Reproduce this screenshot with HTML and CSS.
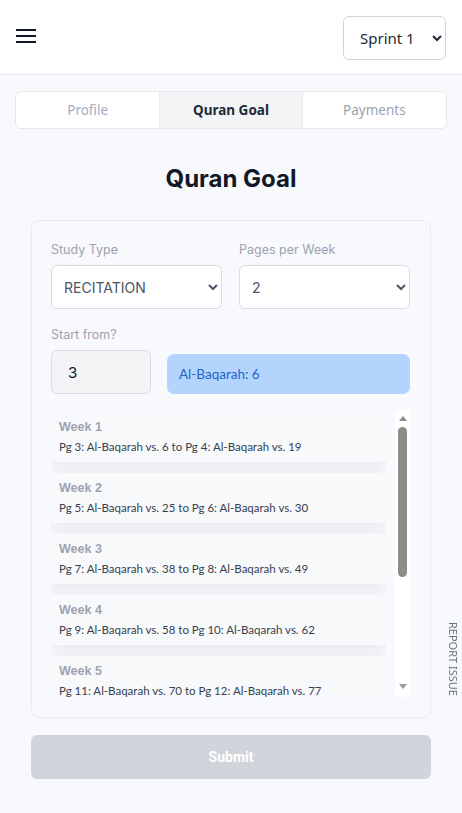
FILE: index.html
```html
<!DOCTYPE html>
<html lang="en">
<head>
<meta charset="utf-8">
<title>Quran Goal</title>
<link rel="stylesheet" href="styles.css">
</head>
<body>
<header class="topbar">
  <button class="menu-btn" aria-label="Menu">
    <svg width="22" height="16" viewBox="0 0 22 16"><path d="M1 2h20M1 8h20M1 14h20" stroke="#111827" stroke-width="2" fill="none"/></svg>
  </button>
  <select class="sprint">
    <option>Sprint 1</option>
    <option>Sprint 2</option>
  </select>
</header>
<main class="page">
  <nav class="tabs">
    <div class="tab">Profile</div>
    <div class="tab active">Quran Goal</div>
    <div class="tab">Payments</div>
  </nav>
  <h1 class="title">Quran Goal</h1>
  <section class="card">
    <div class="grid2">
      <div class="field">
        <label class="label">Study Type</label>
        <select class="control"><option>RECITATION</option><option>MEMORIZATION</option></select>
      </div>
      <div class="field">
        <label class="label">Pages per Week</label>
        <select class="control"><option>2</option><option>1</option><option>3</option></select>
      </div>
    </div>
    <div class="field start">
      <label class="label">Start from?</label>
      <div class="start-row">
        <input class="num" type="text" value="3">
        <div class="surah">Al-Baqarah: 6</div>
      </div>
    </div>
    <div class="weeks-wrap">
      <div class="weeks">
        <div class="week"><div class="wk">Week 1</div><div class="wd">Pg 3: Al-Baqarah vs. 6 to Pg 4: Al-Baqarah vs. 19</div></div>
        <div class="week"><div class="wk">Week 2</div><div class="wd">Pg 5: Al-Baqarah vs. 25 to Pg 6: Al-Baqarah vs. 30</div></div>
        <div class="week"><div class="wk">Week 3</div><div class="wd">Pg 7: Al-Baqarah vs. 38 to Pg 8: Al-Baqarah vs. 49</div></div>
        <div class="week"><div class="wk">Week 4</div><div class="wd">Pg 9: Al-Baqarah vs. 58 to Pg 10: Al-Baqarah vs. 62</div></div>
        <div class="week"><div class="wk">Week 5</div><div class="wd">Pg 11: Al-Baqarah vs. 70 to Pg 12: Al-Baqarah vs. 77</div></div>
      </div>
      <div class="scrollbar" aria-hidden="true">
        <span class="arrow up"></span>
        <span class="thumb"></span>
        <span class="arrow down"></span>
      </div>
    </div>
  </section>
  <button class="submit" disabled>Submit</button>
</main>
<div class="report">REPORT ISSUE</div>
</body>
</html>
```
FILE: styles.css
```css
* { box-sizing: border-box; }
html, body { margin: 0; padding: 0; }
body {
  background: #f8f9fc;
  font-family: Inter, "Liberation Sans", sans-serif;
  color: #111827;
  min-height: 813px;
}
.topbar {
  height: 75px;
  background: #fff;
  border-bottom: 1px solid #e5e7eb;
  display: flex;
  align-items: center;
  justify-content: space-between;
  padding: 0 16px 0 15px;
}
.menu-btn {
  border: 0;
  background: none;
  padding: 0;
  width: 22px;
  height: 16px;
  display: flex;
  margin-top: -2px;
}
.sprint {
  width: 103px;
  height: 44px;
  border: 1px solid #d1d5db;
  border-radius: 6px;
  background: #fff;
  color: #1f2937;
  font-family: "Noto Sans", sans-serif;
  font-size: 15px;
  padding: 0 8px 0 12px;
  margin-top: 2px;
}
.page {
  padding: 16px 15px 0 15px;
}
.tabs {
  display: grid;
  grid-template-columns: 1fr 1fr 1fr;
  height: 38px;
  border: 1px solid #e5e7eb;
  border-radius: 6px;
  background: #fff;
  overflow: hidden;
}
.tab {
  display: flex;
  align-items: center;
  justify-content: center;
  font-family: "Noto Sans", sans-serif;
  font-size: 13.5px;
  color: #9ca3af;
}
.tab:first-child { color: #a3adbf; }
.tab.active {
  background: #f3f4f6;
  color: #1f2937;
  font-weight: 700;
  border-left: 1px solid #e9ebee;
  border-right: 1px solid #e9ebee;
}
.title {
  text-align: center;
  font-size: 24px;
  font-weight: 700;
  margin: 35px 0 0;
  line-height: 30px;
  color: #111827;
}
.card {
  margin: 26px 16px 0;
  border: 1px solid #e9ebf0;
  border-radius: 8px;
  padding: 21px 20px 20px 19px;
  background: #f8f9fc;
}
.grid2 {
  display: grid;
  grid-template-columns: 1fr 1fr;
  gap: 17px;
}
.field { display: flex; flex-direction: column; }
.label {
  font-size: 12.5px;
  color: #9ca3af;
  line-height: 16px;
  margin-bottom: 7px;
}
.control {
  height: 44px;
  border: 1px solid #d9dce2;
  border-radius: 6px;
  background: #fff;
  font-family: Inter, sans-serif;
  font-size: 14px;
  color: #4b5563;
  padding: 0 8px 0 8px;
}
.start { margin-top: 18px; }
.start-row {
  display: flex;
  align-items: flex-end;
  gap: 16px;
}
.num {
  width: 100px;
  height: 44px;
  border: 1px solid #d9dce2;
  border-radius: 6px;
  background: #f3f4f6;
  font-family: Inter, sans-serif;
  font-size: 15px;
  color: #111827;
  padding: 0 16px;
}
.surah {
  flex: 1;
  height: 40px;
  background: #b3d5fd;
  border-radius: 7px;
  color: #2563c9;
  font-family: Lato, sans-serif;
  font-size: 13.5px;
  display: flex;
  align-items: center;
  padding-left: 12px;
}
.weeks-wrap {
  margin-top: 16px;
  height: 287px;
  display: flex;
  gap: 9px;
}
.weeks {
  flex: 1;
  overflow: hidden;
  display: flex;
  flex-direction: column;
  gap: 11px;
  padding-top: 2px;
}
.week {
  flex: 0 0 auto;
  background: #f8f9fb;
  border-radius: 4px;
  padding: 6px 8px 6px;
  box-shadow: 0 6px 16px rgba(17, 24, 39, 0.07);
}
.wk {
  font-family: "Liberation Sans", Arial, sans-serif;
  font-weight: 700;
  font-size: 12.5px;
  color: #9ca3af;
  line-height: 18px;
}
.wd {
  font-family: Lato, sans-serif;
  font-size: 11.5px;
  color: #374151;
  line-height: 18px;
  margin-top: 2px;
}
.scrollbar {
  width: 15px;
  flex: 0 0 15px;
  background: #fff;
  display: flex;
  flex-direction: column;
  align-items: center;
}
.arrow {
  width: 0;
  height: 0;
  border-left: 4px solid transparent;
  border-right: 4px solid transparent;
}
.arrow.up {
  margin-top: 6px;
  border-bottom: 5px solid #8a8a8a;
}
.arrow.down {
  margin-top: auto;
  margin-bottom: 8px;
  border-top: 5px solid #9a9a9a;
}
.thumb {
  width: 9px;
  height: 150px;
  margin-top: 6px;
  border-radius: 5px;
  background: #8e8c89;
}
.submit {
  display: block;
  width: calc(100% - 32px);
  margin: 17px 16px 0;
  height: 44px;
  border: 0;
  border-radius: 6px;
  background: #d1d5db;
  color: #fff;
  font-family: Roboto, sans-serif;
  font-weight: 700;
  font-size: 14px;
}
.report {
  position: fixed;
  right: 1px;
  top: 622px;
  writing-mode: vertical-rl;
  font-family: "Noto Sans", sans-serif;
  font-size: 11px;
  color: #6b7280;
}
```
